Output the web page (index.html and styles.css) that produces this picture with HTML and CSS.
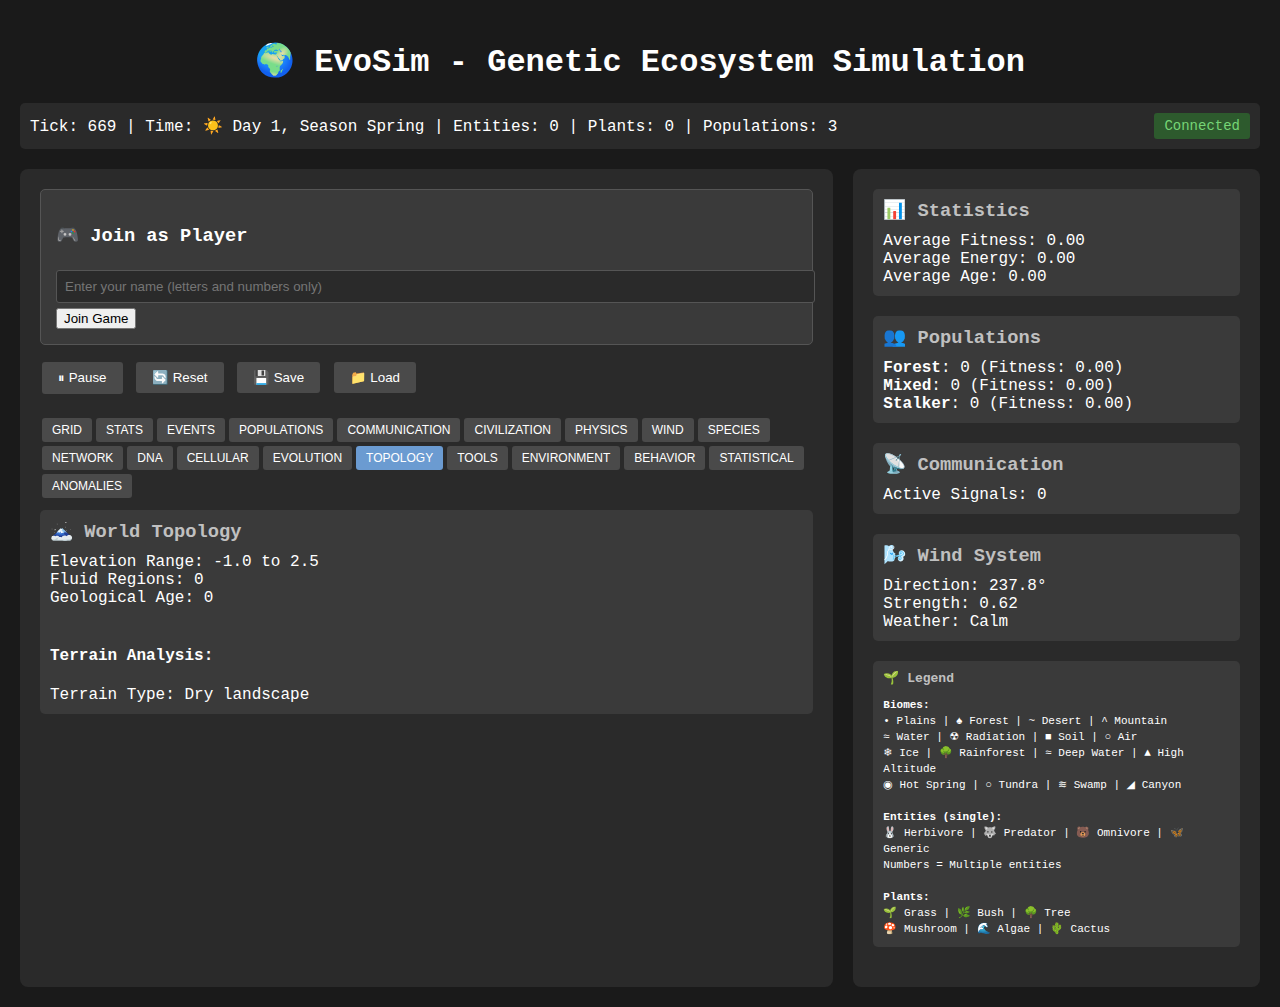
FILE: index.html
```html
<!DOCTYPE html>
<html>
<head>
    <meta charset="utf-8" />
    <title>EvoSim - Genetic Ecosystem Simulation</title>
    <link rel="stylesheet" href="styles.css">
</head>
<body>
<h1 class="title">🌍 EvoSim - Genetic Ecosystem Simulation</h1>
<div class="status-bar">
    <div>Tick: 669 | Time: ☀️ Day 1, Season Spring | Entities: 0 | Plants: 0 | Populations: 3</div>
    <div class="badge">Connected</div>
</div>
<div class="main">
    <div class="panel">
        <div class="join-box">
            <h3>🎮 Join as Player</h3>
            <input class="name-input" type="text" placeholder="Enter your name (letters and numbers only)">
            <button class="join-btn">Join Game</button>
        </div>
        <div class="controls">
            <button class="ctrl-btn">⏸ Pause</button>
            <button class="ctrl-btn">🔄 Reset</button>
            <button class="ctrl-btn">💾 Save</button>
            <button class="ctrl-btn">📁 Load</button>
        </div>
        <div class="tabs">
            <button class="tab">GRID</button>
            <button class="tab">STATS</button>
            <button class="tab">EVENTS</button>
            <button class="tab">POPULATIONS</button>
            <button class="tab">COMMUNICATION</button>
            <button class="tab">CIVILIZATION</button>
            <button class="tab">PHYSICS</button>
            <button class="tab">WIND</button>
            <button class="tab">SPECIES</button>
            <button class="tab">NETWORK</button>
            <button class="tab">DNA</button>
            <button class="tab">CELLULAR</button>
            <button class="tab">EVOLUTION</button>
            <button class="tab active">TOPOLOGY</button>
            <button class="tab">TOOLS</button>
            <button class="tab">ENVIRONMENT</button>
            <button class="tab">BEHAVIOR</button>
            <button class="tab">STATISTICAL</button>
            <button class="tab">ANOMALIES</button>
        </div>
        <div class="card">
            <h3>🗻 World Topology</h3>
            <div>Elevation Range: -1.0 to 2.5</div>
            <div>Fluid Regions: 0</div>
            <div>Geological Age: 0</div>
            <div class="terrain">
                <h4>Terrain Analysis:</h4>
                <div>Terrain Type: Dry landscape</div>
            </div>
        </div>
    </div>
    <div class="panel">
        <div class="card side">
            <h3>📊 Statistics</h3>
            <div>Average Fitness: 0.00</div>
            <div>Average Energy: 0.00</div>
            <div>Average Age: 0.00</div>
        </div>
        <div class="card side">
            <h3>👥 Populations</h3>
            <div><strong>Forest</strong>: 0 (Fitness: 0.00)</div>
            <div><strong>Mixed</strong>: 0 (Fitness: 0.00)</div>
            <div><strong>Stalker</strong>: 0 (Fitness: 0.00)</div>
        </div>
        <div class="card side">
            <h3>📡 Communication</h3>
            <div>Active Signals: 0</div>
        </div>
        <div class="card side">
            <h3>🌬️ Wind System</h3>
            <div>Direction: 237.8°</div>
            <div>Strength: 0.62</div>
            <div>Weather: Calm</div>
        </div>
        <div class="card legend">
            <h4>🌱 Legend</h4>
            <div class="legend-text">
                <strong>Biomes:</strong><br/>
                • Plains | ♠ Forest | ~ Desert | ^ Mountain<br/>
                ≈ Water | ☢ Radiation | ■ Soil | ○ Air<br/>
                ❄ Ice | 🌳 Rainforest | ≈ Deep Water | ▲ High Altitude<br/>
                ◉ Hot Spring | ○ Tundra | ≋ Swamp | ◢ Canyon<br/>
                <br/>
                <strong>Entities (single):</strong><br/>
                🐰 Herbivore | 🐺 Predator | 🐻 Omnivore | 🦋 Generic<br/>
                Numbers = Multiple entities<br/>
                <br/>
                <strong>Plants:</strong><br/>
                🌱 Grass | 🌿 Bush | 🌳 Tree<br/>
                🍄 Mushroom | 🌊 Algae | 🌵 Cactus
            </div>
        </div>
    </div>
</div>
</body>
</html>
```

FILE: styles.css
```css
*{box-sizing: border-box;}
body{
    margin: 0;
    padding: 20px;
    min-height: 100vh;
    display: flex;
    flex-direction: column;
    background-color: #1a1a1a;
    color: #fff;
    font-family: "Liberation Mono", monospace;
    font-size: 16px;
}
.title{
    margin: 21.44px 0;
    text-align: center;
    font-size: 32px;
}
.status-bar{
    display: flex;
    justify-content: space-between;
    align-items: center;
    padding: 10px;
    margin-bottom: 20px;
    background-color: #2a2a2a;
    border-radius: 5px;
}
.badge{
    padding: 5px 10px;
    font-size: 14px;
    color: #76d576;
    background-color: #2d5a2d;
    border-radius: 3px;
}
.main{
    flex: 1;
    display: grid;
    grid-template-columns: 2fr 1fr;
    gap: 20px;
}
.panel{
    padding: 20px;
    background-color: #2a2a2a;
    border-radius: 8px;
}
.join-box{
    padding: 15px;
    margin-bottom: 17px;
    background-color: #3a3a3a;
    border: 1px solid #555;
    border-radius: 5px;
}
.name-input{
    box-sizing: content-box;
    width: 100%;
    padding: 8px;
    margin: 5px 0;
    background-color: #2a2a2a;
    color: #e0e0e0;
    border: 1px solid #555;
    border-radius: 3px;
}
.controls{
    display: flex;
    align-items: flex-start;
    gap: 13.5px;
    height: 32px;
    padding-left: 2px;
    margin-bottom: 22px;
}
.ctrl-btn{
    padding: 8px 16px;
    background-color: #4a4a4a;
    color: #fff;
    border: none;
    border-radius: 3px;
    font-family: "Liberation Sans", sans-serif;
    font-size: 13.3333px;
}
.tabs{
    display: flex;
    flex-wrap: wrap;
    margin-bottom: 10px;
}
.tab{
    margin: 2px;
    padding: 5px 10px;
    background-color: #4a4a4a;
    color: #fff;
    border: none;
    border-radius: 3px;
    font-family: "Liberation Sans", sans-serif;
    font-size: 12px;
}
.tab.active{
    background-color: #6b9bd1;
}
.card{
    padding: 10px;
    background-color: #3a3a3a;
    border-radius: 5px;
}
.card h3{
    margin: 0 0 10px 0;
    color: #c0c0c0;
}
.join-box h3{
    color: #fff;
}
.side{
    margin-bottom: 20px;
}
.terrain{
    margin-top: 40px;
}
.terrain h4{
    margin: 0 0 21px 0;
}
.legend h4{
    margin: 0 0 11px 0;
    font-size: 13px;
    line-height: 15px;
    color: #c0c0c0;
}
.legend-text{
    font-family: "Liberation Mono", "DejaVu Sans", monospace;
    font-size: 11px;
    line-height: 16px;
}
```
